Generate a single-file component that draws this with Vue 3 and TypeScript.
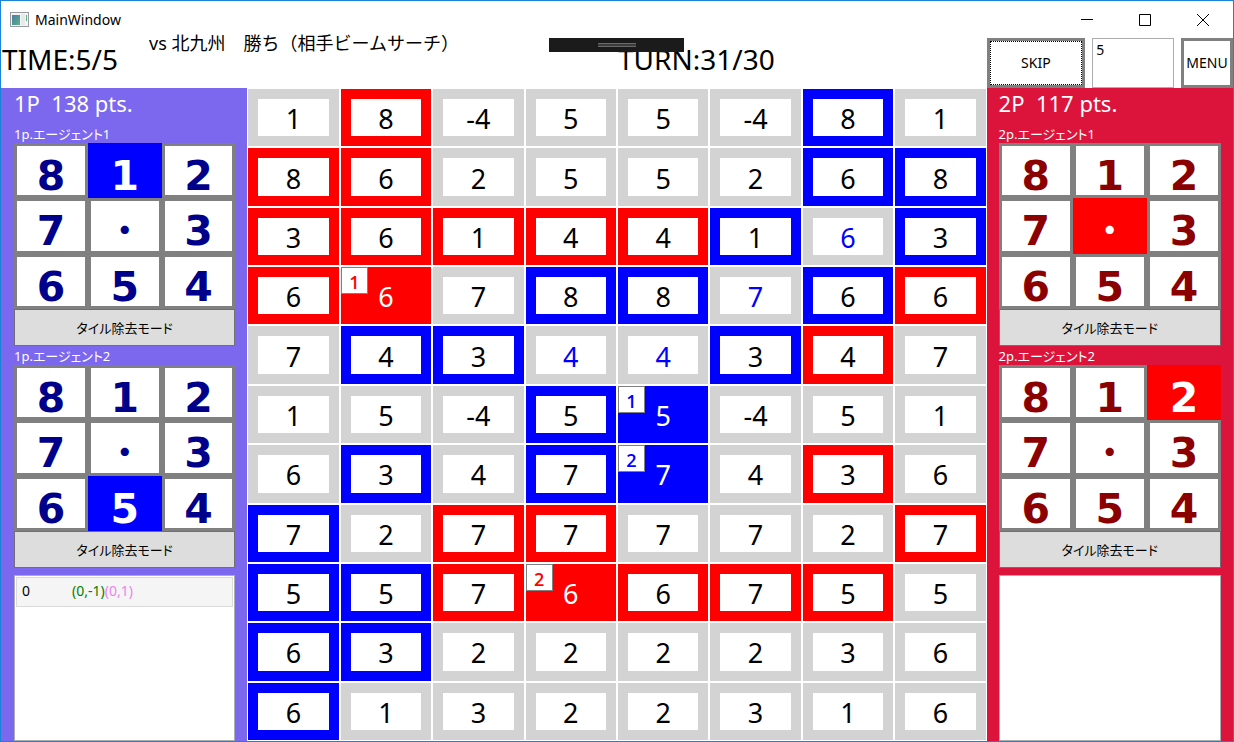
<script setup lang="ts">
import { ref } from 'vue'

type Owner = 'none' | 'red' | 'blue'
interface Cell {
  value: number
  owner: Owner
  enclosed: boolean
  agent: number
}
interface Agent {
  name: string
  selected: string
}
interface Player {
  id: number
  points: number
  agents: Agent[]
  history: { step: number; first: string; second: string }[]
}

const scores = [
  [1, 8, -4, 5, 5, -4, 8, 1],
  [8, 6, 2, 5, 5, 2, 6, 8],
  [3, 6, 1, 4, 4, 1, 6, 3],
  [6, 6, 7, 8, 8, 7, 6, 6],
  [7, 4, 3, 4, 4, 3, 4, 7],
  [1, 5, -4, 5, 5, -4, 5, 1],
  [6, 3, 4, 7, 7, 4, 3, 6],
  [7, 2, 7, 7, 7, 7, 2, 7],
  [5, 5, 7, 6, 6, 7, 5, 5],
  [6, 3, 2, 2, 2, 2, 3, 6],
  [6, 1, 3, 2, 2, 3, 1, 6],
]

// r/b: owned tile, e: tile enclosed by blue, digits: red agents 1-2, blue agents 3-4
const owners = [
  '.r....b.',
  'rr....bb',
  'rrrrrbeb',
  'r1.bbebr',
  '.bbeebr.',
  '...b3...',
  '.b.b4.r.',
  'b.rr...r',
  'bbr2rrr.',
  'bb......',
  'b.......',
]

const cells: Cell[] = scores.flatMap((row, y) =>
  row.map((value, x) => {
    const mark = owners[y][x]
    const owner: Owner = 'r12'.includes(mark) ? 'red' : 'b34'.includes(mark) ? 'blue' : 'none'
    const order = '1234'.indexOf(mark)
    return { value, owner, enclosed: mark === 'e', agent: order < 0 ? 0 : (order % 2) + 1 }
  }),
)

const directions = ['8', '1', '2', '7', '・', '3', '6', '5', '4']

const players = ref<Player[]>([
  {
    id: 1,
    points: 138,
    agents: [
      { name: '1p.エージェント1', selected: '1' },
      { name: '1p.エージェント2', selected: '5' },
    ],
    history: [{ step: 0, first: '(0,-1)', second: '(0,1)' }],
  },
  {
    id: 2,
    points: 117,
    agents: [
      { name: '2p.エージェント1', selected: '・' },
      { name: '2p.エージェント2', selected: '2' },
    ],
    history: [],
  },
])

const skipCount = ref('5')
</script>

<template>
  <div class="window">
    <div class="titlebar">
      <svg class="app-icon" viewBox="0 0 20 16" aria-hidden="true">
        <defs>
          <linearGradient id="pane" x1="0" y1="0" x2="1" y2="1">
            <stop offset="0" stop-color="#4a7fa5" />
            <stop offset="1" stop-color="#5fae86" />
          </linearGradient>
        </defs>
        <rect x="0.5" y="0.5" width="18" height="14" fill="#f4f4f4" stroke="#989ca0" />
        <rect x="2" y="3" width="8" height="10" fill="url(#pane)" />
        <rect x="11" y="2" width="4" height="11" fill="#e8eaea" />
        <rect x="16" y="3" width="1" height="6" fill="#5fae86" />
      </svg>
      <h1>MainWindow</h1>
      <div class="window-buttons">
        <button type="button" aria-label="Minimize">
          <svg viewBox="0 0 12 12"><path d="M0 5.5H12" /></svg>
        </button>
        <button type="button" aria-label="Maximize">
          <svg viewBox="0 0 12 12"><path d="M.5 .5H11.5V11.5H.5Z" /></svg>
        </button>
        <button type="button" aria-label="Close">
          <svg viewBox="0 0 12 12"><path d="M0 0L12 12M12 0L0 12" /></svg>
        </button>
      </div>
    </div>

    <header class="status">
      <span>TIME:5/5</span>
      <span>TURN:31/30</span>
      <div class="actions">
        <button type="button" class="skip">SKIP</button>
        <input v-model="skipCount" type="text" aria-label="Skip count" />
        <button type="button" class="menu">MENU</button>
      </div>
      <p class="memo">vs 北九州　勝ち（相手ビームサーチ）</p>
      <div class="debug-handle"><i></i></div>
    </header>

    <main>
      <section v-for="player in players" :key="player.id" class="player" :class="'p' + player.id">
        <h2>{{ player.id }}P&nbsp; {{ player.points }} pts.</h2>
        <div v-for="agent in player.agents" :key="agent.name" class="agent">
          <h3>{{ agent.name }}</h3>
          <div class="pad">
            <button
              v-for="dir in directions"
              :key="dir"
              type="button"
              :class="{ selected: agent.selected === dir, dot: dir === '・' }"
              @click="agent.selected = dir"
            >{{ dir }}</button>
          </div>
          <button type="button" class="mode">タイル除去モード</button>
        </div>
        <ul class="history">
          <li v-for="item in player.history" :key="item.step">
            <span class="step">{{ item.step }}</span>
            <span class="first">{{ item.first }}</span><span class="second">{{ item.second }}</span>
          </li>
        </ul>
      </section>

      <div class="board">
        <button
          v-for="(cell, i) in cells"
          :key="i"
          type="button"
          class="cell"
          :class="[cell.owner, { enclosed: cell.enclosed, occupied: cell.agent }]"
        >
          {{ cell.value }}
          <span v-if="cell.agent" class="badge">{{ cell.agent }}</span>
        </button>
      </div>
    </main>
  </div>
</template>

<style>
body {
  margin: 0;
}
</style>

<style scoped>
* {
  box-sizing: border-box;
}
.window {
  display: flex;
  flex-direction: column;
  min-height: 100vh;
  border: 1px solid #1883d7;
  background: #fff;
  color: #000;
  font-family: "Noto Sans", "Noto Sans CJK JP", sans-serif;
  font-size: 14px;
}
h1, h2, h3, p, ul {
  margin: 0;
  padding: 0;
  font-weight: 400;
}
button {
  margin: 0;
  padding: 0;
  border: 0;
  border-radius: 0;
  background: #fff;
  color: inherit;
  font: inherit;
}
.titlebar {
  display: flex;
  align-items: center;
  height: 37px;
  padding-left: 9px;
}
.app-icon {
  width: 20px;
  height: 16px;
  margin-right: 5px;
}
h1 {
  font-size: 14px;
}
.window-buttons {
  display: flex;
  margin-left: auto;
  padding-right: 1px;
}
.window-buttons button {
  display: grid;
  place-items: center;
  width: 58px;
  height: 34px;
}
.window-buttons svg {
  width: 12px;
  height: 12px;
  overflow: visible;
  fill: none;
  stroke: #000;
}
.status {
  position: relative;
  display: grid;
  grid-template-columns: minmax(0, 5fr) minmax(0, 3fr) minmax(0, 2fr);
  grid-template-rows: 50px;
  font-size: 28px;
  line-height: 42px;
}
.status > span {
  padding-left: 1px;
}
.actions {
  display: flex;
  gap: 7px;
  font-size: 14px;
}
.actions button {
  border: 3px solid #808080;
}
.actions .skip {
  flex: 0 0 40%;
  outline: 1px dotted #000;
  outline-offset: -4px;
}
.actions .menu {
  flex: 0 0 52px;
}
.actions input {
  flex: 1;
  min-width: 0;
  margin: 0;
  padding: 0 3px 26px;
  border: 1px solid #abadb3;
  background: #fff;
  font: inherit;
  line-height: 20px;
}
.memo {
  position: absolute;
  top: -9px;
  left: 148px;
  font-size: 18px;
  line-height: 28px;
}
.debug-handle {
  position: absolute;
  top: 0;
  left: 548px;
  display: grid;
  place-items: center;
  width: 135px;
  height: 14px;
  background: #1b1b1b;
}
.debug-handle i {
  width: 38px;
  height: 4px;
  border: solid #686868;
  border-width: 1px 0;
  background: #3c3c3c;
}
main {
  flex: 1;
  display: grid;
  grid-template-columns: minmax(0, 1fr) minmax(0, 3fr) minmax(0, 1fr);
}
.player {
  display: flex;
  flex-direction: column;
  grid-row: 1;
  padding: 0 12px 0 13px;
  color: #fff;
}
.p1 {
  --deep: #00008b;
  --active: #00f;
  grid-column: 1;
  background: #7b68ee;
}
.p2 {
  --deep: #8b0000;
  --active: #f00;
  grid-column: 3;
  padding-left: 12px;
  background: #dc143c;
}
h2 {
  height: 37px;
  font-size: 22px;
  line-height: 30px;
}
h3 {
  height: 18px;
  font-size: 13px;
  line-height: 18px;
  font-feature-settings: "palt";
}
.agent {
  margin-bottom: 1px;
}
.agent + .agent {
  margin-bottom: 0;
}
.pad {
  display: grid;
  grid-template-columns: repeat(3, minmax(0, 1fr));
  grid-template-rows: repeat(3, minmax(0, 1fr));
  height: 166px;
}
.pad button {
  padding-top: 11px;
  border: 3px solid #808080;
  color: var(--deep);
  font: 700 41px/38px "DejaVu Sans", "Noto Sans CJK JP", sans-serif;
}
.pad .dot {
  font-size: 32px;
}
.pad .selected {
  border-color: var(--active);
  background: var(--active);
  color: #fff;
}
.mode {
  display: block;
  width: 100%;
  height: 37px;
  border: 1px solid #707070;
  background: #ddd;
  color: #000;
  font-size: 13px;
  font-feature-settings: "palt";
}
.history {
  flex: 1;
  margin-top: 7px;
  padding: 1px;
  border: 1px solid #abadb3;
  background: #fff;
  color: #000;
  list-style: none;
}
.history li {
  display: flex;
  height: 30px;
  padding-left: 5px;
  border: 1px solid #dadada;
  background: #f5f5f5;
  line-height: 26px;
}
.step {
  width: 50px;
}
.first {
  color: #008000;
}
.second {
  color: #ee82ee;
}
.board {
  display: grid;
  grid-column: 2;
  grid-row: 1;
  grid-template-columns: repeat(8, 1fr);
  grid-template-rows: repeat(11, 1fr);
}
.cell {
  --owner: #d3d3d3;
  position: relative;
  margin: 1px;
  padding-top: 2px;
  border: 10px solid var(--owner);
  font-size: 27px;
  line-height: 35px;
}
.red {
  --owner: #f00;
}
.blue {
  --owner: #00f;
}
.enclosed {
  color: #00f;
}
.occupied {
  background: var(--owner);
  color: #fff;
}
.badge {
  position: absolute;
  top: -10px;
  left: -10px;
  width: 27px;
  height: 27px;
  border: 1px solid #808080;
  background: #fff;
  color: var(--owner);
  font-family: "Open Sans", "Noto Sans", sans-serif;
  font-size: 18px;
  font-weight: 600;
  line-height: 28px;
}
</style>
